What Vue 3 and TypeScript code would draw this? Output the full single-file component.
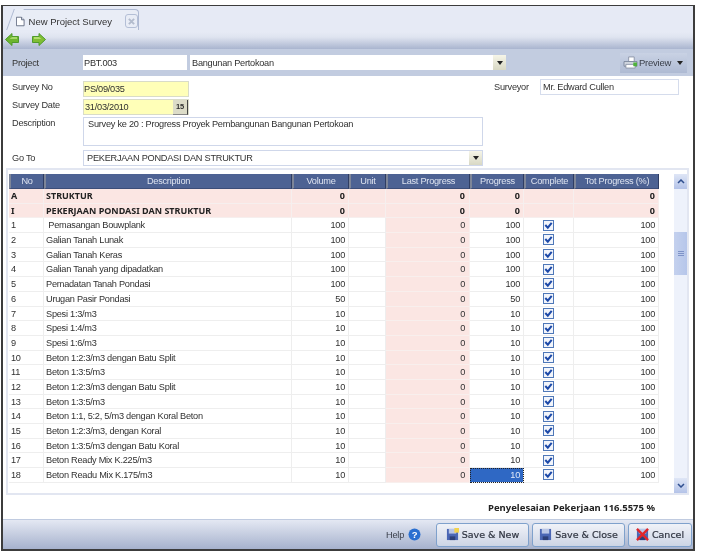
<script setup lang="ts">
interface Row { no: string; desc: string; vol: number; last: number; prog: number; done: boolean; tot: number; bold?: boolean; active?: boolean }
const item = (no: number, desc: string, vol: number, prog = vol): Row => ({ no: String(no), desc, vol, last: 0, prog, done: true, tot: 100 })
const rows: Row[] = [
  { no: 'A', desc: 'STRUKTUR', vol: 0, last: 0, prog: 0, done: false, tot: 0, bold: true },
  { no: 'I', desc: 'PEKERJAAN PONDASI DAN STRUKTUR', vol: 0, last: 0, prog: 0, done: false, tot: 0, bold: true },
  item(1, '\u00a0Pemasangan Bouwplank', 100),
  item(2, 'Galian Tanah Lunak', 100),
  item(3, 'Galian Tanah Keras', 100),
  item(4, 'Galian Tanah yang dipadatkan', 100),
  item(5, 'Pemadatan Tanah Pondasi', 100),
  item(6, 'Urugan Pasir Pondasi', 50),
  item(7, 'Spesi 1:3/m3', 10),
  item(8, 'Spesi 1:4/m3', 10),
  item(9, 'Spesi 1:6/m3', 10),
  item(10, 'Beton 1:2:3/m3 dengan Batu Split', 10),
  item(11, 'Beton 1:3:5/m3', 10),
  item(12, 'Beton 1:2:3/m3 dengan Batu Split', 10),
  item(13, 'Beton 1:3:5/m3', 10),
  item(14, 'Beton 1:1, 5:2, 5/m3 dengan Koral Beton', 10),
  item(15, 'Beton 1:2:3/m3, dengan Koral', 10),
  item(16, 'Beton 1:3:5/m3 dengan Batu Koral', 10),
  item(17, 'Beton Ready Mix K.225/m3', 10),
  { ...item(18, 'Beton Readu Mix K.175/m3', 10), active: true },
]
const headers = ['No', 'Description', 'Volume', 'Unit', 'Last Progress', 'Progress', 'Complete', 'Tot Progress (%)']
</script>

<template>
  <div class="page">
    <div class="window">
      <div class="tabstrip">
        <div class="tab">
          <svg class="doc" viewBox="0 0 10 11" width="10" height="11"><path d="M.5.5h6l3 3v7h-9z" fill="#fff" stroke="#59637a" /><path d="M6.500.5v3h3" fill="#d5dcea" stroke="#59637a" /></svg>
          <span class="tabtext">New Project Survey</span>
          <span class="tabclose"><svg viewBox="0 0 8 8" width="7" height="7"><path d="M1 1l6 6M7 1l-6 6" stroke="#b3bccd" stroke-width="2.200" /></svg></span>
        </div>
        <div class="navs">
          <svg viewBox="0 0 14 13" width="14" height="13"><path d="M.5 6.500l6.500-6v3h6.500v6h-6.500v3z" fill="#6db52f" stroke="#4f9a2c" /><path d="M4 6.500l3-2.500h5v2h-8z" fill="#a6d76a" /></svg>
          <svg viewBox="0 0 14 13" width="14" height="13"><path d="M13.500 6.500l-6.500-6v3h-6.500v6h6.500v3z" fill="#7fbd33" stroke="#4f9a2c" /><path d="M10 6.500l-3-2.500h-5v2h8z" fill="#b2dd6e" /></svg>
        </div>
      </div>

      <div class="projectbar">
        <label class="lbl">Project</label>
        <div class="field code">PBT.003</div>
        <div class="field combo name">Bangunan Pertokoan<span class="drop"><i /></span></div>
        <div class="preview">
          <svg viewBox="0 0 16 14" width="15" height="13"><path d="M6 1h6v5h-6z" fill="#fff" stroke="#8a94a8" /><path d="M1 6h14v5h-14z" fill="#d5dae3" stroke="#7b869c" /><path d="M3 9h10v4h-10z" fill="#fff" stroke="#8a94a8" /><path d="M11 7h4v4h-4z" fill="#4fb23c" /></svg>
          <span class="ptext">Preview</span>
          <i class="arrow" />
        </div>
      </div>

      <div class="form">
        <div class="formrow r1">
          <label class="lbl">Survey No</label>
          <div class="field yellow sn">PS/09/035</div>
          <label class="lbl surveyor">Surveyor</label>
          <div class="field sv">Mr. Edward Cullen</div>
        </div>
        <div class="formrow r2">
          <label class="lbl">Survey Date</label>
          <div class="field yellow sn date">31/03/2010<span class="cal">15</span></div>
        </div>
        <div class="formrow r3">
          <label class="lbl">Description</label>
          <div class="field desc">Survey ke 20 : Progress Proyek Pembangunan Bangunan Pertokoan</div>
        </div>
        <div class="formrow r4">
          <label class="lbl golbl">Go To</label>
          <div class="field combo goto">PEKERJAAN PONDASI DAN STRUKTUR<span class="drop"><i /></span></div>
        </div>
      </div>

      <div class="gridbox">
        <div class="grid">
          <div class="row head">
            <div v-for="h in headers" :key="h" class="hc">{{ h }}</div>
          </div>
          <div v-for="r in rows" :key="r.no" class="row" :class="{ bold: r.bold }">
            <div class="c">{{ r.no }}</div>
            <div class="c">{{ r.desc }}</div>
            <div class="c num">{{ r.vol }}</div>
            <div class="c"></div>
            <div class="c num pink">{{ r.last }}</div>
            <div class="c num" :class="{ active: r.active }">{{ r.prog }}</div>
            <div class="c mid">
              <svg v-if="r.done" viewBox="0 0 11 11" width="11" height="11"><rect x=".5" y=".5" width="10" height="10" fill="#f2f5fb" stroke="#4f78b8" /><path d="M2.300 5l2.500 2.700 3.900-4.900" fill="none" stroke="#1c49a8" stroke-width="2" /></svg>
            </div>
            <div class="c num">{{ r.tot }}</div>
          </div>
        </div>
        <div class="scrollbar">
          <div class="sbtn"><svg viewBox="0 0 8 5" width="8" height="5"><path d="M1 4l3-3 3 3" fill="none" stroke="#2f4f8f" stroke-width="1.500" /></svg></div>
          <div class="strack"><div class="sthumb"><i /><i /><i /></div></div>
          <div class="sbtn"><svg viewBox="0 0 8 5" width="8" height="5"><path d="M1 1l3 3 3-3" fill="none" stroke="#2f4f8f" stroke-width="1.500" /></svg></div>
        </div>
      </div>

      <div class="summary">Penyelesaian Pekerjaan 116.5575 %</div>

      <div class="footer">
        <span class="help">Help</span>
        <svg class="helpicon" viewBox="0 0 13 13" width="13" height="13"><circle cx="6.500" cy="6.500" r="6" fill="#2a6fd0" /><text x="6.500" y="10" text-anchor="middle" font-size="9.500" font-weight="700" font-family="Liberation Sans" fill="#fff">?</text></svg>
        <button class="btn b1">
          <svg viewBox="0 0 14 14" width="13" height="13"><path d="M1 1h12v12h-12z" fill="#4a66b4" /><path d="M3 1h8v5h-8z" fill="#b9c6e6" /><path d="M4 9h6v4h-6z" fill="#2c3f78" /><path d="M9 0h5v5h-5z" fill="#f2d24c" /></svg>
          Save &amp; New
        </button>
        <button class="btn b2">
          <svg viewBox="0 0 14 14" width="13" height="13"><path d="M1 1h12v12h-12z" fill="#4a66b4" /><path d="M3 1h8v5h-8z" fill="#b9c6e6" /><path d="M4 9h6v4h-6z" fill="#2c3f78" /></svg>
          Save &amp; Close
        </button>
        <button class="btn b3">
          <svg viewBox="0 0 14 14" width="13" height="13"><path d="M1 1h12v12h-12z" fill="#4a66b4" /><path d="M3 1h8v5h-8z" fill="#b9c6e6" /><path d="M4 9h6v4h-6z" fill="#2c3f78" /><path d="M1 1l12 12M13 1l-12 12" stroke="#e0262a" stroke-width="2.500" /></svg>
          Cancel
        </button>
      </div>
    </div>
  </div>
</template>

<style>
html, body { margin: 0; background: #fff; }
</style>

<style scoped>
.page {
  width: 705px;
  height: 559px;
  padding: 5px 10px 8px 1px;
  box-sizing: border-box;
  font-family: "Liberation Sans", Arial, sans-serif;
  font-size: 9.200px;
  letter-spacing: -0.25px;
  color: #303030;
  filter: blur(0.45px);
  overflow: hidden;
}
.window {
  height: 100%;
  box-sizing: border-box;
  border: 1px solid #3c3c3c;
  border-width: 1px 2px 2px 2px;
  background: #fff;
  display: flex;
  flex-direction: column;
}
.tabstrip {
  height: 43px;
  flex: none;
  box-sizing: border-box;
  padding: 3px 0 0 2px;
  background: linear-gradient(#e6eaf5 0, #e6eaf5 26px, #dfe4f0 31px, #a9b5cf 43px);
}
.tab {
  position: relative;
  width: 124px;
  height: 21px;
  margin-left: 10px;
  box-sizing: border-box;
  display: flex;
  align-items: center;
  padding: 2px 0 0 1px;
  border-top: 1px solid #aeb9d2;
  border-right: 1px solid #aeb9d2;
  border-radius: 0 4px 0 0;
  background: #e9edf6;
  color: #333;
}
.tab::before {
  content: "";
  position: absolute;
  left: -5px;
  top: -1px;
  bottom: 0;
  width: 9px;
  border-left: 1px solid #aeb9d2;
  transform: skewX(-20deg);
  background: #e9edf6;
  z-index: 0;
}
.doc, .tabtext, .tabclose { position: relative; }
.tabtext { margin-left: 4px; font-size: 9.500px; letter-spacing: 0; white-space: nowrap; }
.tabclose {
  margin-left: 13px;
  width: 15px;
  height: 14px;
  box-sizing: border-box;
  border: 1px solid #b4bfd6;
  border-radius: 3px;
  display: flex;
  align-items: center;
  justify-content: center;
}
.navs { display: flex; gap: 13px; margin-top: 3px; }
.projectbar {
  height: 27px;
  flex: none;
  display: flex;
  align-items: center;
  background: #c2cce0;
  padding-left: 9px;
  position: relative;
}
.lbl { display: block; color: #333; }
.projectbar .lbl { width: 71px; }
.field {
  box-sizing: border-box;
  background: #fff;
  padding: 0 2px;
  border: 1px solid #d5dcec;
  display: flex;
  align-items: center;
  position: relative;
  white-space: nowrap;
}
.code { width: 104px; height: 15px; border: 0; padding-left: 1px; }
.name { width: 316px; height: 15px; margin-left: 3px; border: 0; padding-left: 2px; }
.drop {
  position: absolute;
  right: 0;
  top: 0;
  bottom: 0;
  width: 13px;
  background: linear-gradient(#f6f5e8, #d8d8c4);
  display: flex;
  align-items: center;
  justify-content: center;
}
.drop i, .arrow {
  display: block;
  width: 0;
  height: 0;
  border: 3px solid transparent;
  border-top: 4px solid #222;
  border-bottom: 0;
}
.preview {
  margin-left: auto;
  margin-right: 6px;
  width: 67px;
  height: 20px;
  box-sizing: border-box;
  display: flex;
  align-items: center;
  padding-left: 3px;
  background: linear-gradient(#c9d2e4, #aebad3);
  color: #3a3f4a;
}
.ptext { margin-left: 1px; font-size: 9.500px; white-space: nowrap; }
.preview .arrow { margin-left: auto; margin-right: 4px; }
.form { height: 92px; flex: none; padding: 5px 0 0 9px; box-sizing: border-box; position: relative; }
.formrow { display: flex; align-items: flex-start; }
.formrow .lbl { width: 71px; flex: none; line-height: 13px; }
.r1 { height: 18px; }
.r2 { height: 18px; }
.r3 { height: 33px; }
.r4 { height: 16px; }
.golbl { margin-top: 2px; }
.yellow { background: #ffffb8; border-color: #d9dcc8; padding-left: 0; }
.sn { width: 106px; height: 16px; }
.date { padding-left: 1px; }
.cal {
  position: absolute;
  right: 0;
  top: 0;
  width: 15px;
  height: 15px;
  background: #dcdcc8;
  border-right: 1px solid #444;
  border-bottom: 1px solid #888;
  box-sizing: border-box;
  font-size: 7.500px;
  text-align: center;
  line-height: 14px;
  font-weight: 700;
}
.formrow .surveyor { margin-left: 305px; width: 46px; }
.sv { width: 139px; height: 16px; margin-top: -2px; }
.desc { width: 400px; height: 29px; align-items: flex-start; padding: 1px 0 0 4px; border-color: #cfd7ea; }
.goto { width: 400px; height: 16px; padding-left: 3px; border-color: #cfd7ea; }
.gridbox {
  height: 327px;
  flex: none;
  margin: 0 4px 0 3px;
  box-sizing: border-box;
  border: 2px solid #e2e6f1;
  padding: 4px 0 0 1px;
  display: flex;
  justify-content: space-between;
  background: #fff;
}
.grid { width: 650px; }
.row {
  display: grid;
  grid-template-columns: 35px 248px 57px 37px 84px 54px 50px 85px;
  height: 14.700px;
}
.row.head { height: 15px; background: #4d6293; }
.hc {
  color: #dde3f0;
  text-align: center;
  line-height: 14px;
  border-left: 2px solid #7d8598;
  border-right: 1px solid #2f3d63;
  border-bottom: 1px solid #3c4d78;
  box-sizing: border-box;
  white-space: nowrap;
}
.c {
  box-sizing: border-box;
  border-right: 1px solid #eeeeee;
  border-bottom: 1px solid #eeeeee;
  padding: 0 3px 0 2px;
  line-height: 14px;
  white-space: nowrap;
  overflow: hidden;
}
.num { text-align: right; }
.mid { display: flex; justify-content: center; align-items: center; padding: 0; }
.pink { background: #fbe6e3; border-color: #f8efed; padding-right: 4px; }
.bold .c {
  background: #fbe6e3;
  border-color: #f6efee;
  font-family: "Noto Sans", sans-serif;
  font-size: 9px;
  letter-spacing: 0;
  line-height: 13px;
  font-weight: 700;
  color: #222;
}
.active { background: #2f68c4; color: #dfe8f8; outline: 1px dotted #222; outline-offset: -1px; }
.scrollbar {
  width: 13px;
  display: flex;
  flex-direction: column;
  background: #eef2fb;
}
.sbtn {
  height: 15px;
  flex: none;
  display: flex;
  align-items: center;
  justify-content: center;
  background: linear-gradient(#dfe6f6, #b4c3e8);
}
.strack { flex: 1; padding-top: 43px; }
.sthumb {
  height: 43px;
  background: linear-gradient(90deg, #c4d1ee, #b6c6ea);
  display: flex;
  flex-direction: column;
  align-items: center;
  justify-content: center;
  gap: 1px;
}
.sthumb i { display: block; width: 6px; height: 1px; background: #7e93c8; }
.summary {
  flex: 1;
  display: flex;
  align-items: center;
  justify-content: flex-end;
  padding-right: 38px;
  font-family: "Noto Sans", sans-serif;
  font-size: 9.500px;
  letter-spacing: 0;
  font-weight: 700;
  color: #222;
}
.footer {
  height: 30px;
  flex: none;
  display: flex;
  align-items: center;
  justify-content: flex-end;
  padding-right: 1px;
  border-top: 1px solid #c0cbe0;
  background: linear-gradient(#e4e8f3, #a6b2cd);
  box-sizing: border-box;
}
.help { color: #3a3f4a; margin-right: 4px; }
.helpicon { margin-right: 12px; }
.btn {
  height: 24px;
  padding: 0;
  margin-left: 3px;
  display: flex;
  align-items: center;
  justify-content: center;
  gap: 3px;
  border: 1px solid #7fa1cc;
  border-radius: 3px;
  background: linear-gradient(#f0f2f8, #cdd5e5);
  font-family: "DejaVu Sans", sans-serif;
  font-size: 9.500px;
  letter-spacing: 0;
  -webkit-text-stroke: 0.2px #2f3440;
  color: #2f3440;
}
.btn svg { flex: none; }
.b1, .b2 { width: 93px; }
.b3 { width: 64px; }
</style>
